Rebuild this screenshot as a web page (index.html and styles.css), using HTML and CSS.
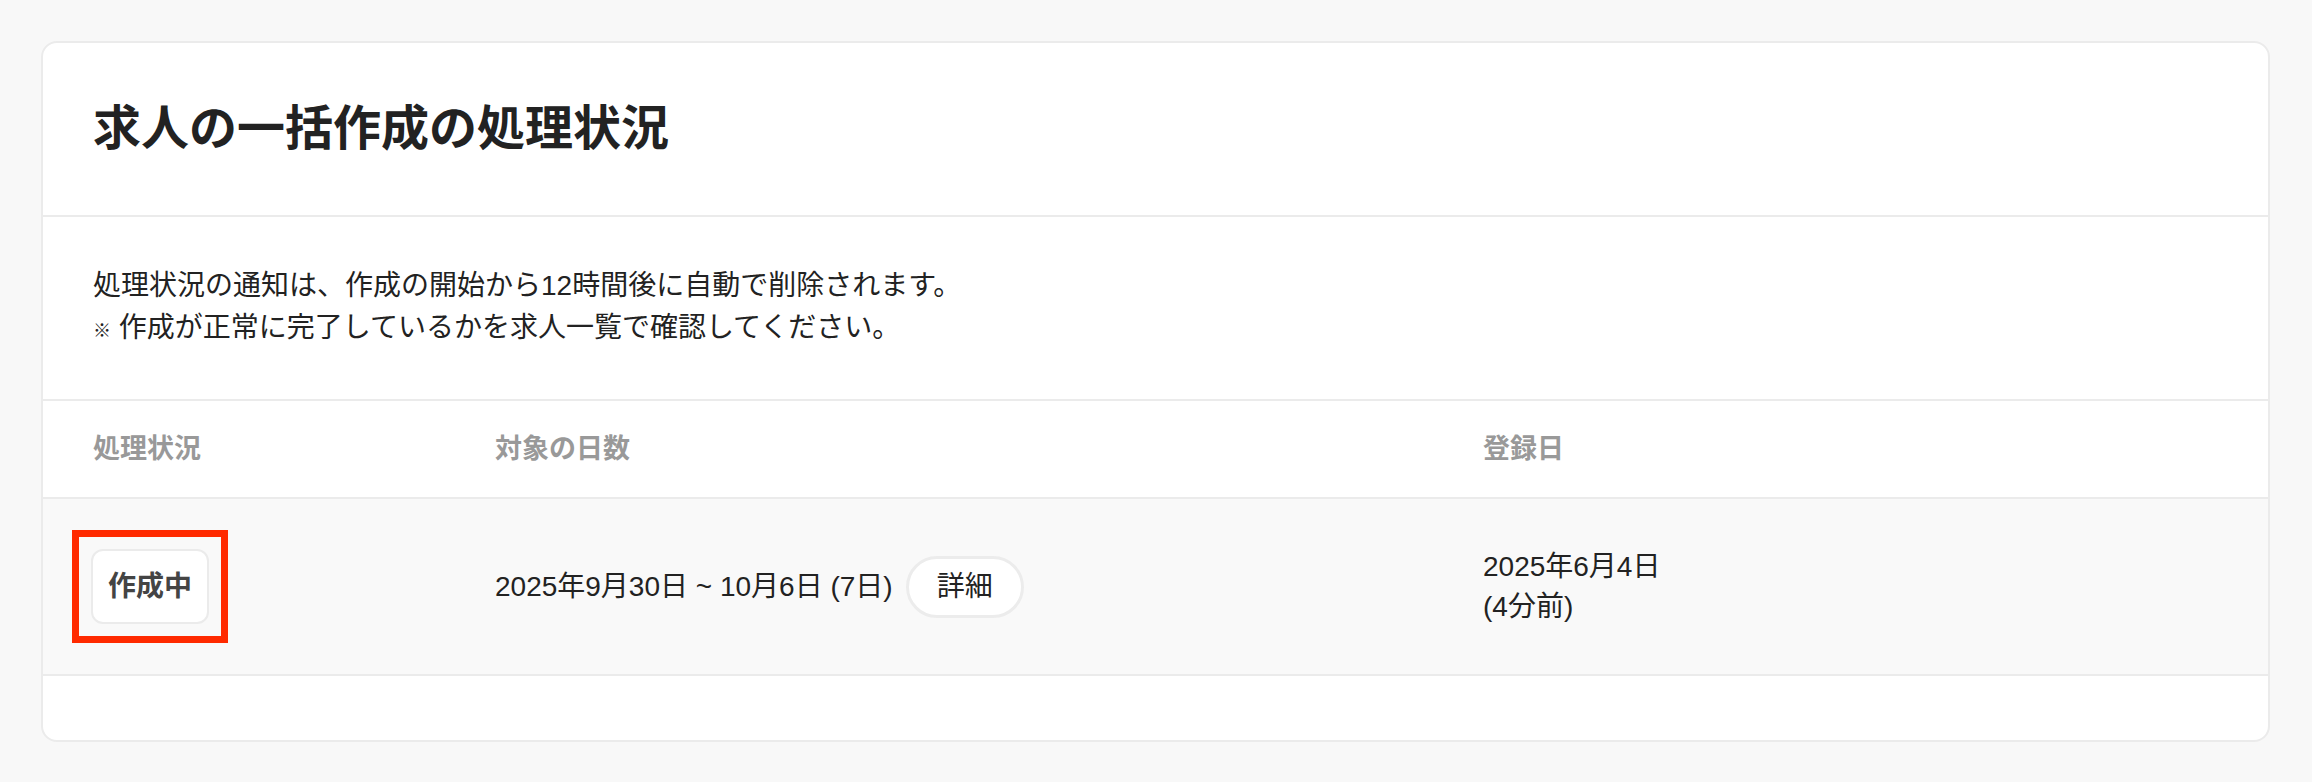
FILE: index.html
```html
<!DOCTYPE html>
<html lang="ja">
<head>
<meta charset="utf-8">
<meta name="viewport" content="width=device-width, initial-scale=1.0">
<title>求人の一括作成の処理状況</title>
<link rel="stylesheet" href="styles.css">
</head>
<body>
	<section class="card">
		<header class="card-head">
			<h1 class="card-title">求人の一括作成の処理状況</h1>
		</header>

		<div class="notice">
			<p>処理状況の通知は、作成の開始から12時間後に自動で削除されます。</p>
			<p><span class="mark">※</span> 作成が正常に完了しているかを求人一覧で確認してください。</p>
		</div>

		<div class="jobs">
			<div class="jobs-row jobs-head">
				<div>処理状況</div>
				<div>対象の日数</div>
				<div>登録日</div>
			</div>
			<div class="jobs-row jobs-item">
				<div><span class="status">作成中</span></div>
				<div class="range">
					<span>2025年9月30日 ~ 10月6日 (7日)</span>
					<button class="detail-btn" type="button">詳細</button>
				</div>
				<div class="created">
					<span>2025年6月4日</span>
					<span>(4分前)</span>
				</div>
			</div>
		</div>

		<div class="card-foot"></div>
	</section>
</body>
</html>
```

FILE: styles.css
```css
* {
	box-sizing: border-box;
}

body {
	margin: 0;
	padding: 41px 42px 42px 41px;
	background: #f8f8f8;
	color: #222;
	font-family: "Liberation Sans", "Noto Sans CJK JP", sans-serif;
}

.card {
	background: #fff;
	border: 2px solid #ebebeb;
	border-radius: 16px;
}

.card-head {
	padding: 58px 50px;
	border-bottom: 2px solid #ebebeb;
}

.card-title {
	margin: 0;
	font-size: 48px;
	line-height: 56px;
	font-weight: 700;
}

.notice {
	padding: 48px 50px 47px;
	border-bottom: 2px solid #ebebeb;
	font-size: 28px;
	line-height: 42px;
}

.notice p {
	margin: 0;
}

.notice .mark {
	font-size: 18px;
	font-weight: 700;
}

/* table */
.jobs-row {
	display: grid;
	grid-template-columns: 402px 988px 1fr;
	align-items: center;
	padding: 0 50px;
	border-bottom: 2px solid #ebebeb;
}

.jobs-head {
	padding-top: 29px;
	padding-bottom: 28px;
	color: #999;
	font-size: 27px;
	line-height: 39px;
	font-weight: 700;
}

.jobs-item {
	height: 177px;
	background: #f9f9f9;
	font-size: 28px;
	line-height: 40px;
}

.status {
	position: relative;
	display: inline-block;
	margin-left: -2px;
	padding: 16px 15px;
	border: 2px solid #ebebeb;
	border-radius: 12px;
	background: #fff;
	color: #444;
	font-size: 28px;
	line-height: 39px;
	font-weight: 700;
}

/* red highlight frame around the badge */
.status::after {
	content: "";
	position: absolute;
	top: -21px;
	right: -21px;
	bottom: -21px;
	left: -21px;
	border: 7px solid #ff2a00;
}

.range {
	display: flex;
	align-items: center;
	gap: 13px;
}

.detail-btn {
	padding: 8px 28px;
	border: 3px solid #ececec;
	border-radius: 31px;
	background: #fff;
	color: #222;
	font-family: inherit;
	font-size: 28px;
	line-height: 40px;
}

.created {
	display: flex;
	flex-direction: column;
}

.card-foot {
	height: 64px;
}
```
